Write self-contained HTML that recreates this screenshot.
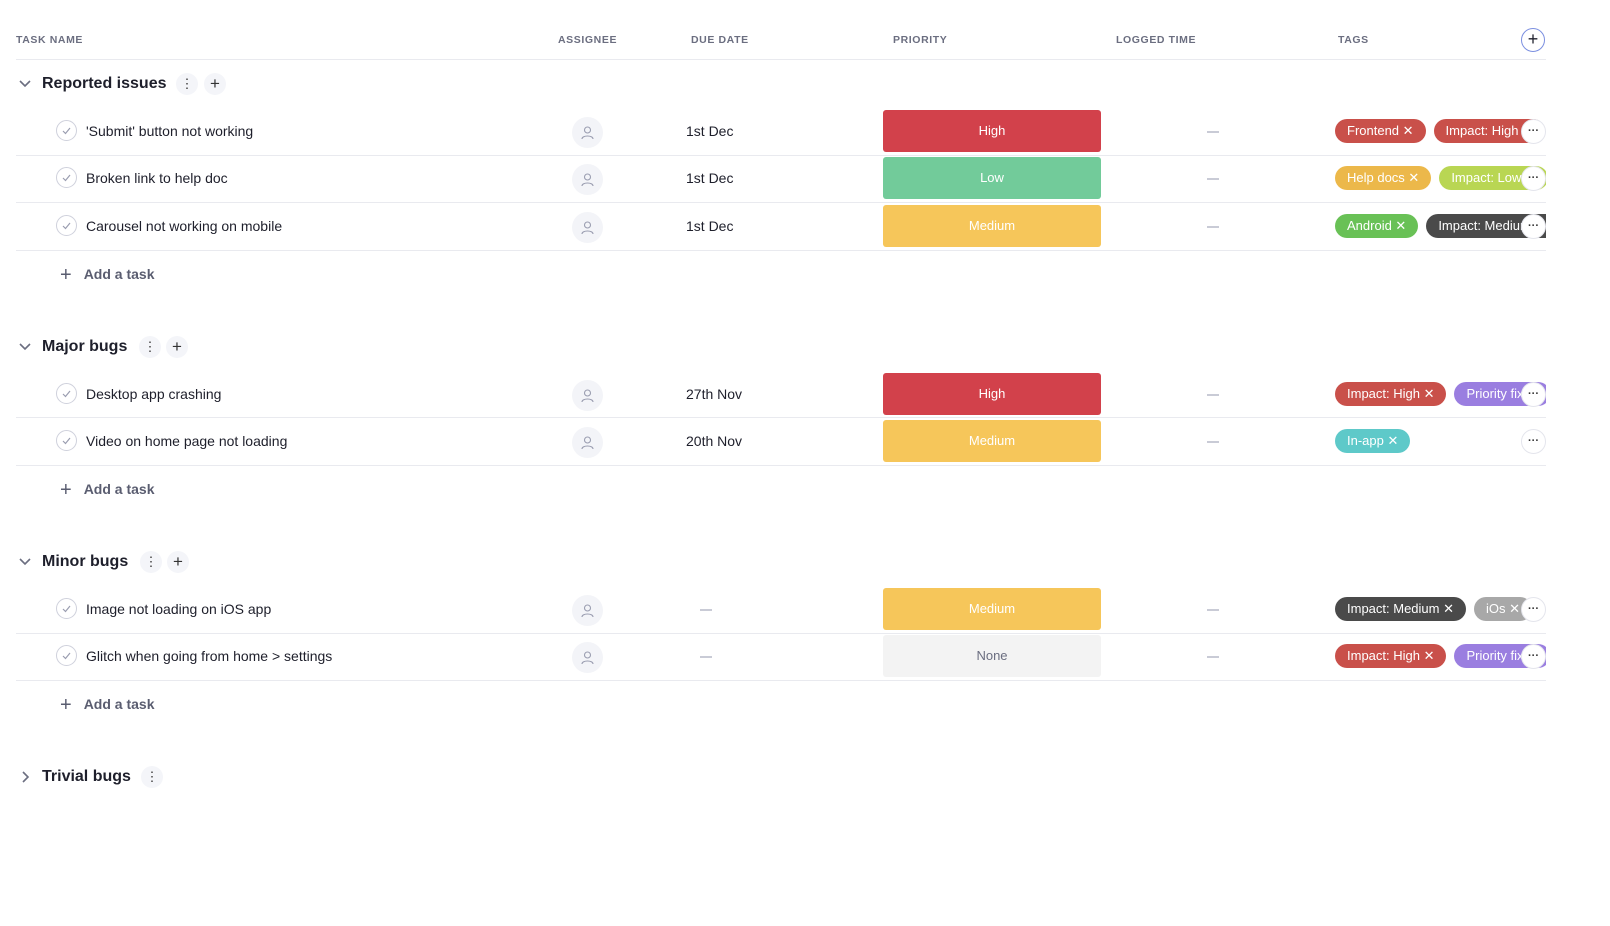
<!DOCTYPE html><html><head><meta charset="utf-8"><style>
*{box-sizing:border-box;margin:0;padding:0}
body{width:1610px;height:926px;background:#fff;font-family:"Liberation Sans",sans-serif;color:#1e1f2b;position:relative;overflow:hidden}
.a{position:absolute}
.hd{position:absolute;top:34px;font-size:10.5px;font-weight:bold;color:#6b6e80;letter-spacing:.6px}
.line{position:absolute;left:16px;width:1530px;height:1px;background:#e9eaef}
.gt{position:absolute;left:42px;font-size:16px;font-weight:bold;color:#1e1f2b}
.chev{position:absolute;left:18px;width:14px;height:14px}
.ib{position:absolute;width:22px;height:22px;border-radius:50%;background:#f4f5f9;text-align:center;line-height:22px;font-size:13px;color:#333}
.row{position:absolute;left:0;width:1610px;height:48px}
.chk{position:absolute;left:56px;top:13px;width:21px;height:21px;border:1px solid #cfd1dc;border-radius:50%}
.tn{position:absolute;left:86px;top:16px;font-size:14px}
.av{position:absolute;left:572px;top:10px;width:31px;height:31px;border-radius:50%;background:#f3f4f8}
.dd{position:absolute;left:686px;top:16px;font-size:14px}
.ddash{position:absolute;left:700px;top:24px;width:12px;height:2px;background:#c9cbd6}
.pr{position:absolute;left:883px;top:3px;width:218px;height:42px;border-radius:3px;color:#fff;font-size:13px;text-align:center;line-height:42px}
.lt{position:absolute;left:1207px;top:24px;width:12px;height:2px;background:#c9cbd6}
.tags{position:absolute;left:1335px;top:12px;width:211px;height:24px;overflow:hidden;white-space:nowrap}
.tag{display:inline-block;height:24px;line-height:24px;border-radius:12px;color:#fff;font-size:13px;padding:0 12px;margin-right:8px;vertical-align:top}
.more{position:absolute;left:1521px;top:12px;width:25px;height:25px;border-radius:50%;background:#fff;border:1px solid #e4e5ec;text-align:center;line-height:22px;font-size:11px;font-weight:bold;color:#333}
.add{position:absolute;left:60px;font-size:14px;font-weight:bold;color:#5a5d70}
.add span{font-size:20px;font-weight:normal;margin-right:12px;color:#5a5d70;vertical-align:-2px}
</style></head><body>
<div class="hd" style="left:16px">TASK NAME</div>
<div class="hd" style="left:558px">ASSIGNEE</div>
<div class="hd" style="left:691px">DUE DATE</div>
<div class="hd" style="left:893px">PRIORITY</div>
<div class="hd" style="left:1116px">LOGGED TIME</div>
<div class="hd" style="left:1338px">TAGS</div>
<div class="a" style="left:1521px;top:28px;width:24px;height:24px;border-radius:50%;border:1px solid #7b8fe0;text-align:center;line-height:21px;font-size:18px">+</div>
<div class="line" style="top:59px"></div>

<svg class="chev" style="top:77px" viewBox="0 0 14 14"><path d="M2 4l5 5 5-5" fill="none" stroke="#6b6e80" stroke-width="1.6"/></svg>
<div class="gt" style="top:75px">Reported issues</div>
<div class="ib" style="left:176px;top:73px">⋮</div><div class="ib" style="left:204px;top:73px;font-size:17px">+</div>

<div class="row" style="top:107px"><div class="chk"></div><svg class="a" style="left:61px;top:18px" width="11" height="11"><path d="M2 6l2.5 2.5L9 3" fill="none" stroke="#9a9db0" stroke-width="1.2"/></svg><div class="tn">'Submit' button not working</div><div class="av"></div><svg class="a" style="left:580px;top:18px" width="15" height="15"><circle cx="7.5" cy="5" r="3" fill="none" stroke="#9a9db0" stroke-width="1.1"/><path d="M2 14c0-4 11-4 11 0" fill="none" stroke="#9a9db0" stroke-width="1.1"/></svg><div class="dd">1st Dec</div><div class="pr" style="background:#d2414b">High</div><div class="lt"></div><div class="tags"><span class="tag" style="background:#c9504a">Frontend ✕</span><span class="tag" style="background:#c9504a">Impact: High ✕</span></div><div class="more">···</div></div>
<div class="line" style="top:155px"></div>
<div class="row" style="top:154px"><div class="chk"></div><svg class="a" style="left:61px;top:18px" width="11" height="11"><path d="M2 6l2.5 2.5L9 3" fill="none" stroke="#9a9db0" stroke-width="1.2"/></svg><div class="tn">Broken link to help doc</div><div class="av"></div><svg class="a" style="left:580px;top:18px" width="15" height="15"><circle cx="7.5" cy="5" r="3" fill="none" stroke="#9a9db0" stroke-width="1.1"/><path d="M2 14c0-4 11-4 11 0" fill="none" stroke="#9a9db0" stroke-width="1.1"/></svg><div class="dd">1st Dec</div><div class="pr" style="background:#72cb9a">Low</div><div class="lt"></div><div class="tags"><span class="tag" style="background:#ecb84a">Help docs ✕</span><span class="tag" style="background:#b9d653">Impact: Low ✕</span></div><div class="more">···</div></div>
<div class="line" style="top:202px"></div>
<div class="row" style="top:202px"><div class="chk"></div><svg class="a" style="left:61px;top:18px" width="11" height="11"><path d="M2 6l2.5 2.5L9 3" fill="none" stroke="#9a9db0" stroke-width="1.2"/></svg><div class="tn">Carousel not working on mobile</div><div class="av"></div><svg class="a" style="left:580px;top:18px" width="15" height="15"><circle cx="7.5" cy="5" r="3" fill="none" stroke="#9a9db0" stroke-width="1.1"/><path d="M2 14c0-4 11-4 11 0" fill="none" stroke="#9a9db0" stroke-width="1.1"/></svg><div class="dd">1st Dec</div><div class="pr" style="background:#f6c65a">Medium</div><div class="lt"></div><div class="tags"><span class="tag" style="background:#69c156">Android ✕</span><span class="tag" style="background:#4a4a4a">Impact: Medium ✕</span></div><div class="more">···</div></div>
<div class="line" style="top:250px"></div>
<div class="add" style="top:264px"><span>+</span>Add a task</div>

<svg class="chev" style="top:340px" viewBox="0 0 14 14"><path d="M2 4l5 5 5-5" fill="none" stroke="#6b6e80" stroke-width="1.6"/></svg>
<div class="gt" style="top:338px">Major bugs</div>
<div class="ib" style="left:139px;top:336px">⋮</div><div class="ib" style="left:166px;top:336px;font-size:17px">+</div>

<div class="row" style="top:370px"><div class="chk"></div><svg class="a" style="left:61px;top:18px" width="11" height="11"><path d="M2 6l2.5 2.5L9 3" fill="none" stroke="#9a9db0" stroke-width="1.2"/></svg><div class="tn">Desktop app crashing</div><div class="av"></div><svg class="a" style="left:580px;top:18px" width="15" height="15"><circle cx="7.5" cy="5" r="3" fill="none" stroke="#9a9db0" stroke-width="1.1"/><path d="M2 14c0-4 11-4 11 0" fill="none" stroke="#9a9db0" stroke-width="1.1"/></svg><div class="dd">27th Nov</div><div class="pr" style="background:#d2414b">High</div><div class="lt"></div><div class="tags"><span class="tag" style="background:#c9504a">Impact: High ✕</span><span class="tag" style="background:#9a7ee0">Priority fix ✕</span></div><div class="more">···</div></div>
<div class="line" style="top:417px"></div>
<div class="row" style="top:417px"><div class="chk"></div><svg class="a" style="left:61px;top:18px" width="11" height="11"><path d="M2 6l2.5 2.5L9 3" fill="none" stroke="#9a9db0" stroke-width="1.2"/></svg><div class="tn">Video on home page not loading</div><div class="av"></div><svg class="a" style="left:580px;top:18px" width="15" height="15"><circle cx="7.5" cy="5" r="3" fill="none" stroke="#9a9db0" stroke-width="1.1"/><path d="M2 14c0-4 11-4 11 0" fill="none" stroke="#9a9db0" stroke-width="1.1"/></svg><div class="dd">20th Nov</div><div class="pr" style="background:#f6c65a">Medium</div><div class="lt"></div><div class="tags"><span class="tag" style="background:#5ec9c9">In-app ✕</span></div><div class="more">···</div></div>
<div class="line" style="top:465px"></div>
<div class="add" style="top:479px"><span>+</span>Add a task</div>

<svg class="chev" style="top:555px" viewBox="0 0 14 14"><path d="M2 4l5 5 5-5" fill="none" stroke="#6b6e80" stroke-width="1.6"/></svg>
<div class="gt" style="top:553px">Minor bugs</div>
<div class="ib" style="left:140px;top:551px">⋮</div><div class="ib" style="left:167px;top:551px;font-size:17px">+</div>

<div class="row" style="top:585px"><div class="chk"></div><svg class="a" style="left:61px;top:18px" width="11" height="11"><path d="M2 6l2.5 2.5L9 3" fill="none" stroke="#9a9db0" stroke-width="1.2"/></svg><div class="tn">Image not loading on iOS app</div><div class="av"></div><svg class="a" style="left:580px;top:18px" width="15" height="15"><circle cx="7.5" cy="5" r="3" fill="none" stroke="#9a9db0" stroke-width="1.1"/><path d="M2 14c0-4 11-4 11 0" fill="none" stroke="#9a9db0" stroke-width="1.1"/></svg><div class="ddash"></div><div class="pr" style="background:#f6c65a">Medium</div><div class="lt"></div><div class="tags"><span class="tag" style="background:#4a4a4a">Impact: Medium ✕</span><span class="tag" style="background:#a8a8a8">iOs ✕</span></div><div class="more">···</div></div>
<div class="line" style="top:633px"></div>
<div class="row" style="top:632px"><div class="chk"></div><svg class="a" style="left:61px;top:18px" width="11" height="11"><path d="M2 6l2.5 2.5L9 3" fill="none" stroke="#9a9db0" stroke-width="1.2"/></svg><div class="tn">Glitch when going from home &gt; settings</div><div class="av"></div><svg class="a" style="left:580px;top:18px" width="15" height="15"><circle cx="7.5" cy="5" r="3" fill="none" stroke="#9a9db0" stroke-width="1.1"/><path d="M2 14c0-4 11-4 11 0" fill="none" stroke="#9a9db0" stroke-width="1.1"/></svg><div class="ddash"></div><div class="pr" style="background:#f3f3f3;color:#6b6e80">None</div><div class="lt"></div><div class="tags"><span class="tag" style="background:#c9504a">Impact: High ✕</span><span class="tag" style="background:#9a7ee0">Priority fix ✕</span></div><div class="more">···</div></div>
<div class="line" style="top:680px"></div>
<div class="add" style="top:694px"><span>+</span>Add a task</div>

<svg class="chev" style="top:770px" viewBox="0 0 14 14"><path d="M5 2l5 5-5 5" fill="none" stroke="#6b6e80" stroke-width="1.6"/></svg>
<div class="gt" style="top:768px">Trivial bugs</div>
<div class="ib" style="left:141px;top:766px">⋮</div>
</body></html>
